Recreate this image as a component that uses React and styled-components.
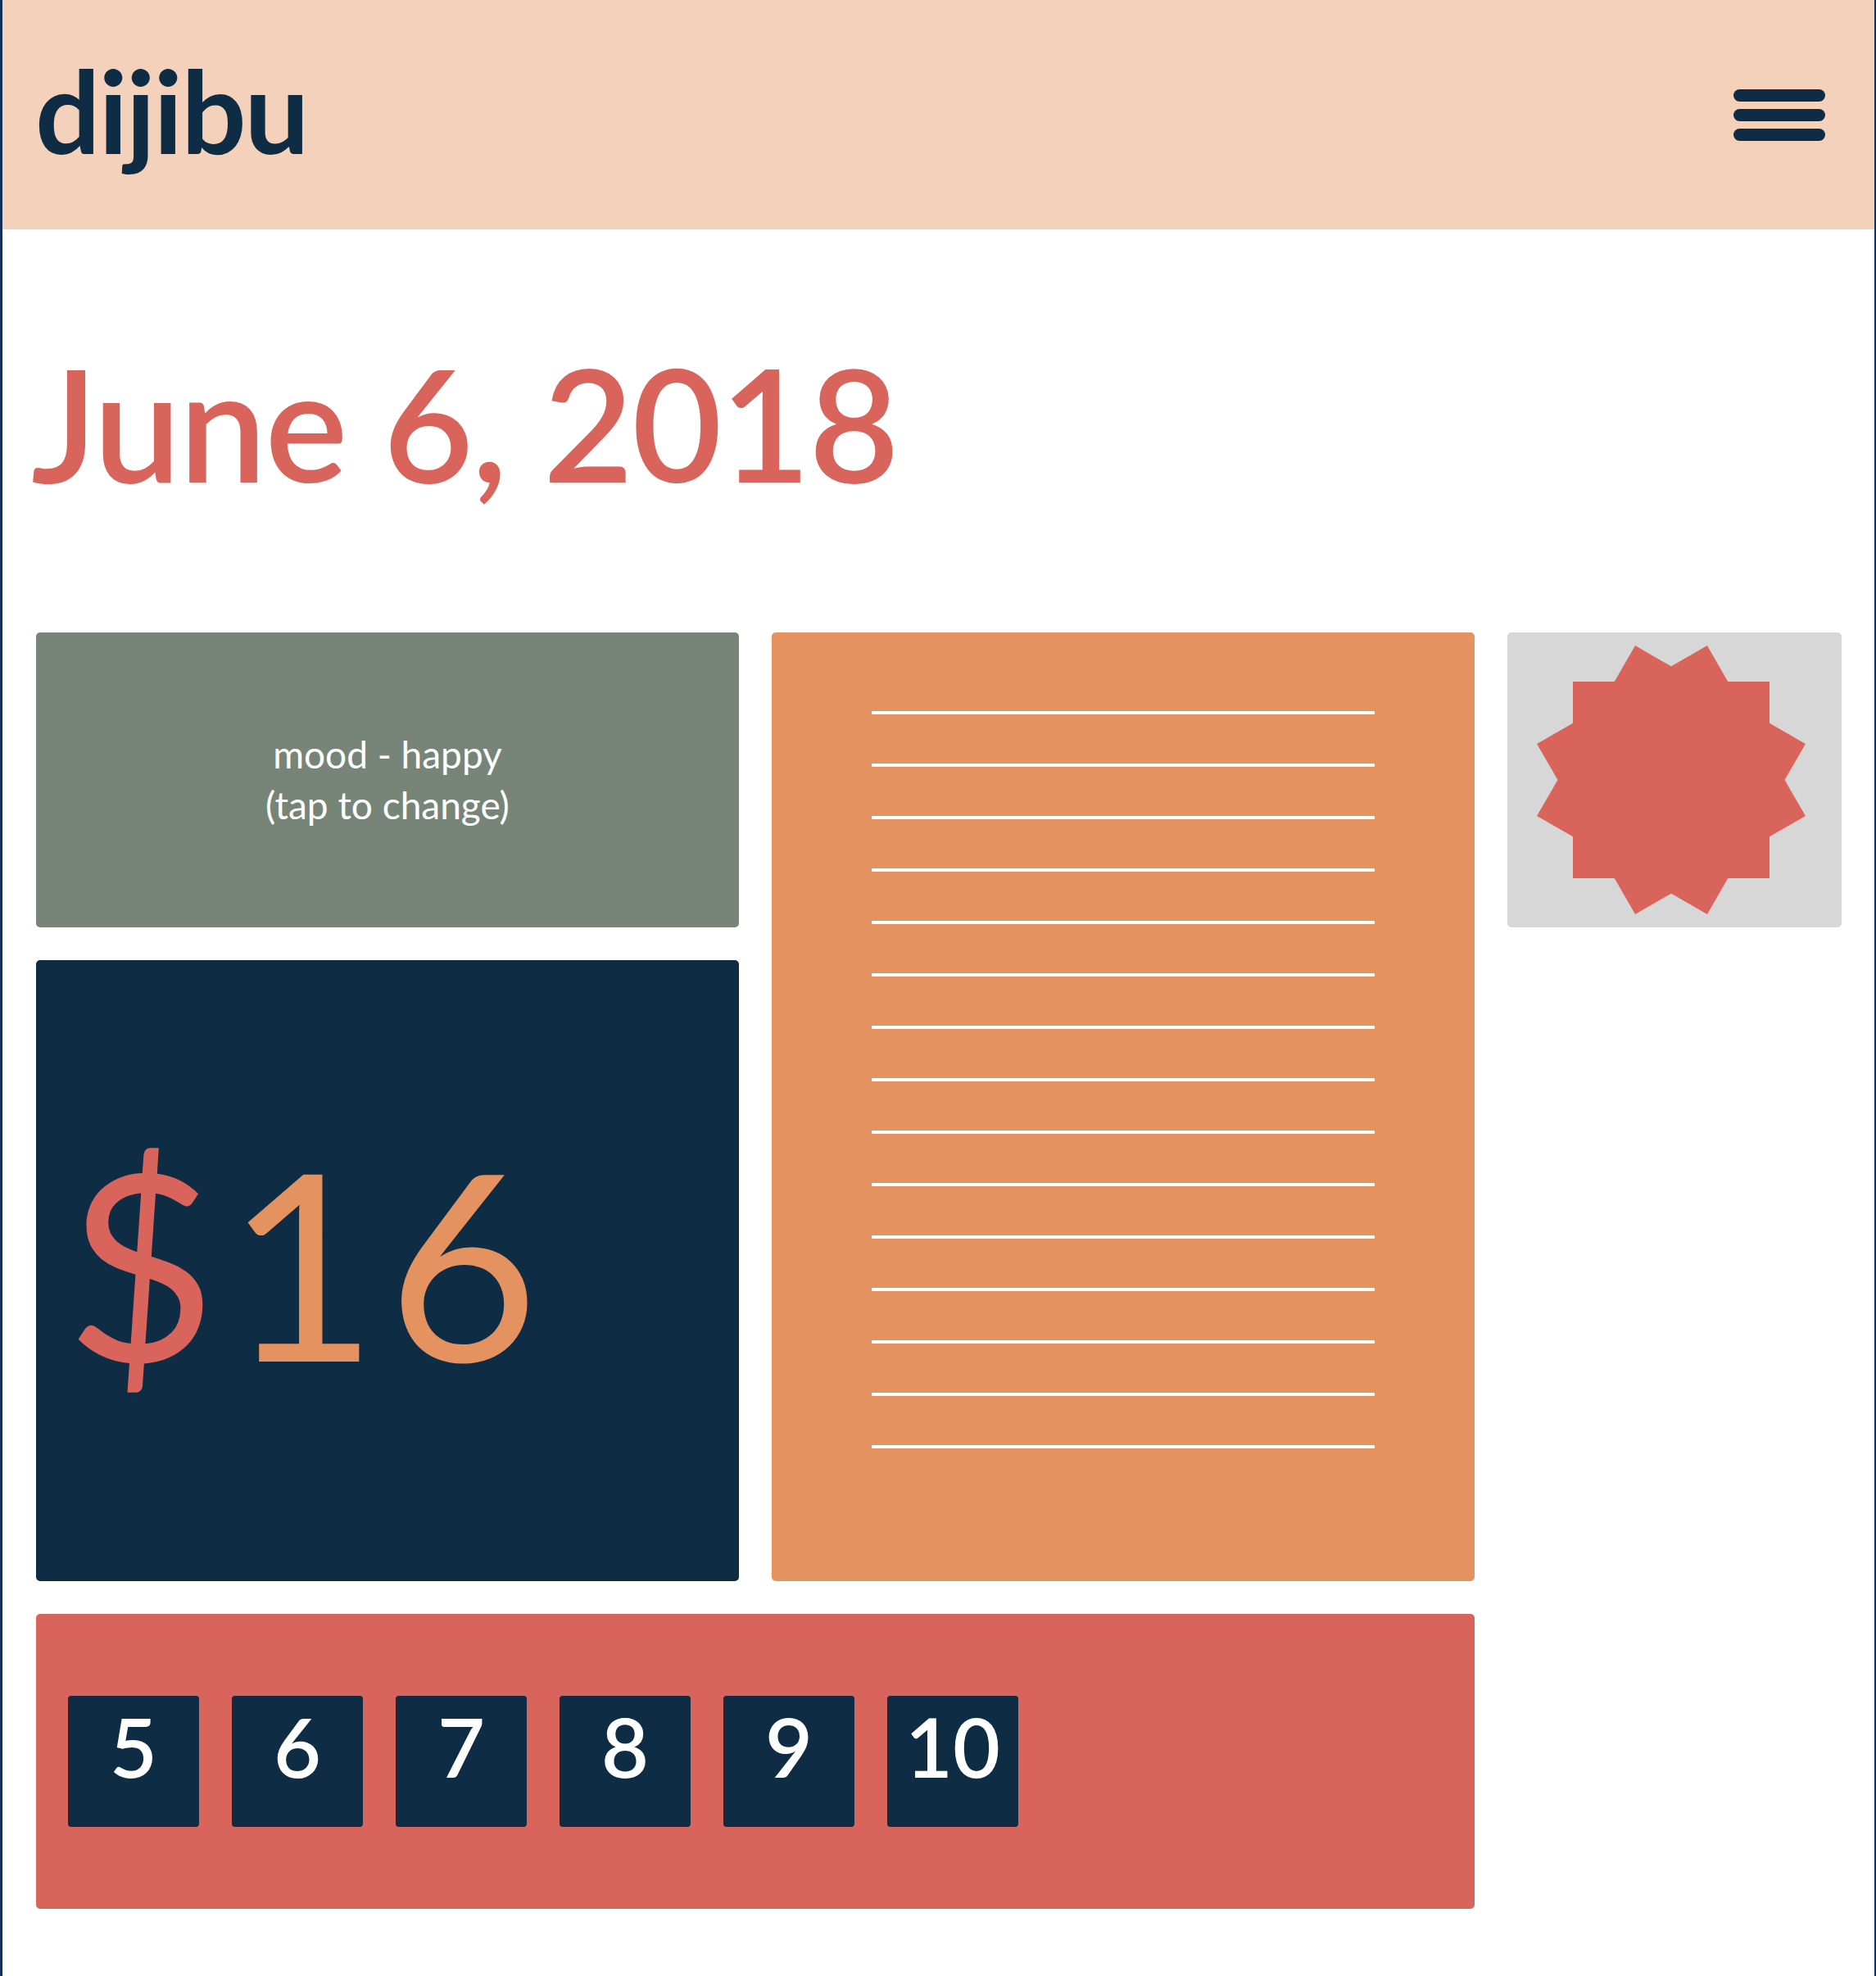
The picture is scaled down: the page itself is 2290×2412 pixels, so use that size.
import React from "react";
import styled, { createGlobalStyle } from "styled-components";

const GlobalStyle = createGlobalStyle`
  html, body { margin: 0; padding: 0; background: #ffffff; }
  body { font-family: "Lato", "Noto Sans", sans-serif; }
  * { box-sizing: border-box; }
`;

const Page = styled.div`
  min-height: 2412px;
  background: #ffffff;
  border-left: 3px solid #142f5a;
  border-right: 2px solid #142f5a;
`;

const Header = styled.header`
  height: 280px;
  background: #f4d1bb;
  display: flex;
  align-items: center;
  justify-content: space-between;
  padding: 0 60px 0 40px;
`;

const Logo = styled.div`
  font-family: "Lato", "Noto Sans", sans-serif;
  font-size: 140px;
  font-weight: 700;
  line-height: 1;
  color: #0e2d44;
  margin-bottom: 12px;
  letter-spacing: -2px;
`;

const Burger = styled.button`
  display: flex;
  flex-direction: column;
  gap: 9px;
  padding: 0;
  border: 0;
  background: transparent;
`;

const Bar = styled.span`
  display: block;
  width: 112px;
  height: 15px;
  border-radius: 8px;
  background: #0e2d44;
`;

const Main = styled.main`
  padding: 140px 0 80px 41px;
`;

const Title = styled.h1`
  margin: 0 0 162px -6px;
  font-family: "Lato", "Noto Sans", sans-serif;
  font-size: 190px;
  font-weight: 600;
  line-height: 1;
  letter-spacing: -2px;
  color: #d9645b;
`;

const Grid = styled.div`
  display: grid;
  grid-template-columns: 858px 858px 408px;
  grid-template-rows: 360px 758px 360px;
  gap: 40px;
`;

const Card = styled.div`
  border-radius: 5px;
  background: ${(p) => p.$bg};
  grid-column: ${(p) => p.$col};
  grid-row: ${(p) => p.$row};
`;

const MoodCard = styled(Card)`
  display: flex;
  align-items: center;
  justify-content: center;
  text-align: center;
  color: #ffffff;
  font-size: 46px;
  line-height: 62px;
  cursor: pointer;
`;

const NotesCard = styled(Card)`
  display: flex;
  flex-direction: column;
  align-items: center;
  gap: 60px;
  padding-top: 96px;
`;

const NoteLine = styled.div`
  width: 614px;
  height: 4px;
  background: #ffffff;
`;

const StarCard = styled(Card)`
  display: flex;
  align-items: center;
  justify-content: center;
  padding-right: 8px;
`;

const MoneyCard = styled(Card)`
  display: flex;
  align-items: center;
  padding: 0 0 24px 36px;
  font-size: 318px;
  line-height: 1;
  font-weight: 400;
  letter-spacing: 12px;
`;

const Dollar = styled.span`
  color: #d9645b;
`;

const Amount = styled.span`
  color: #e4925f;
`;

const WeekCard = styled(Card)`
  display: flex;
  align-items: center;
  gap: 40px;
  padding: 0 39px;
`;

const DayBox = styled.div`
  width: 160px;
  height: 160px;
  border-radius: 4px;
  background: #0e2d44;
  color: #ffffff;
  display: flex;
  align-items: center;
  justify-content: center;
  font-size: 100px;
  font-weight: 600;
  line-height: 1;
  padding-bottom: 38px;
`;

const Star = () => (
  <svg width="340" height="340" viewBox="-170 -170 340 340">
    {[0, 30, 60].map((a) => (
      <rect key={a} x="-120" y="-120" width="240" height="240" fill="#d9645b" transform={`rotate(${a})`} />
    ))}
  </svg>
);

export default function App() {
  const lines = Array.from({ length: 15 });
  const days = [5, 6, 7, 8, 9, 10];
  return (
    <>
      <GlobalStyle />
      <Page>
        <Header>
          <Logo>dijibu</Logo>
          <Burger aria-label="menu">
            <Bar />
            <Bar />
            <Bar />
          </Burger>
        </Header>
        <Main>
          <Title>June 6, 2018</Title>
          <Grid>
            <MoodCard $bg="#768577" $col="1" $row="1">
              <div>
                mood - happy
                <br />
                (tap to change)
              </div>
            </MoodCard>
            <NotesCard $bg="#e4925f" $col="2" $row="1 / 3">
              {lines.map((_, i) => (
                <NoteLine key={i} />
              ))}
            </NotesCard>
            <StarCard $bg="#d7d7d7" $col="3" $row="1">
              <Star />
            </StarCard>
            <MoneyCard $bg="#0e2d44" $col="1" $row="2">
              <Dollar>$</Dollar>
              <Amount>16</Amount>
            </MoneyCard>
            <WeekCard $bg="#d9645b" $col="1 / 3" $row="3">
              {days.map((d) => (
                <DayBox key={d}>{d}</DayBox>
              ))}
            </WeekCard>
          </Grid>
        </Main>
      </Page>
    </>
  );
}
